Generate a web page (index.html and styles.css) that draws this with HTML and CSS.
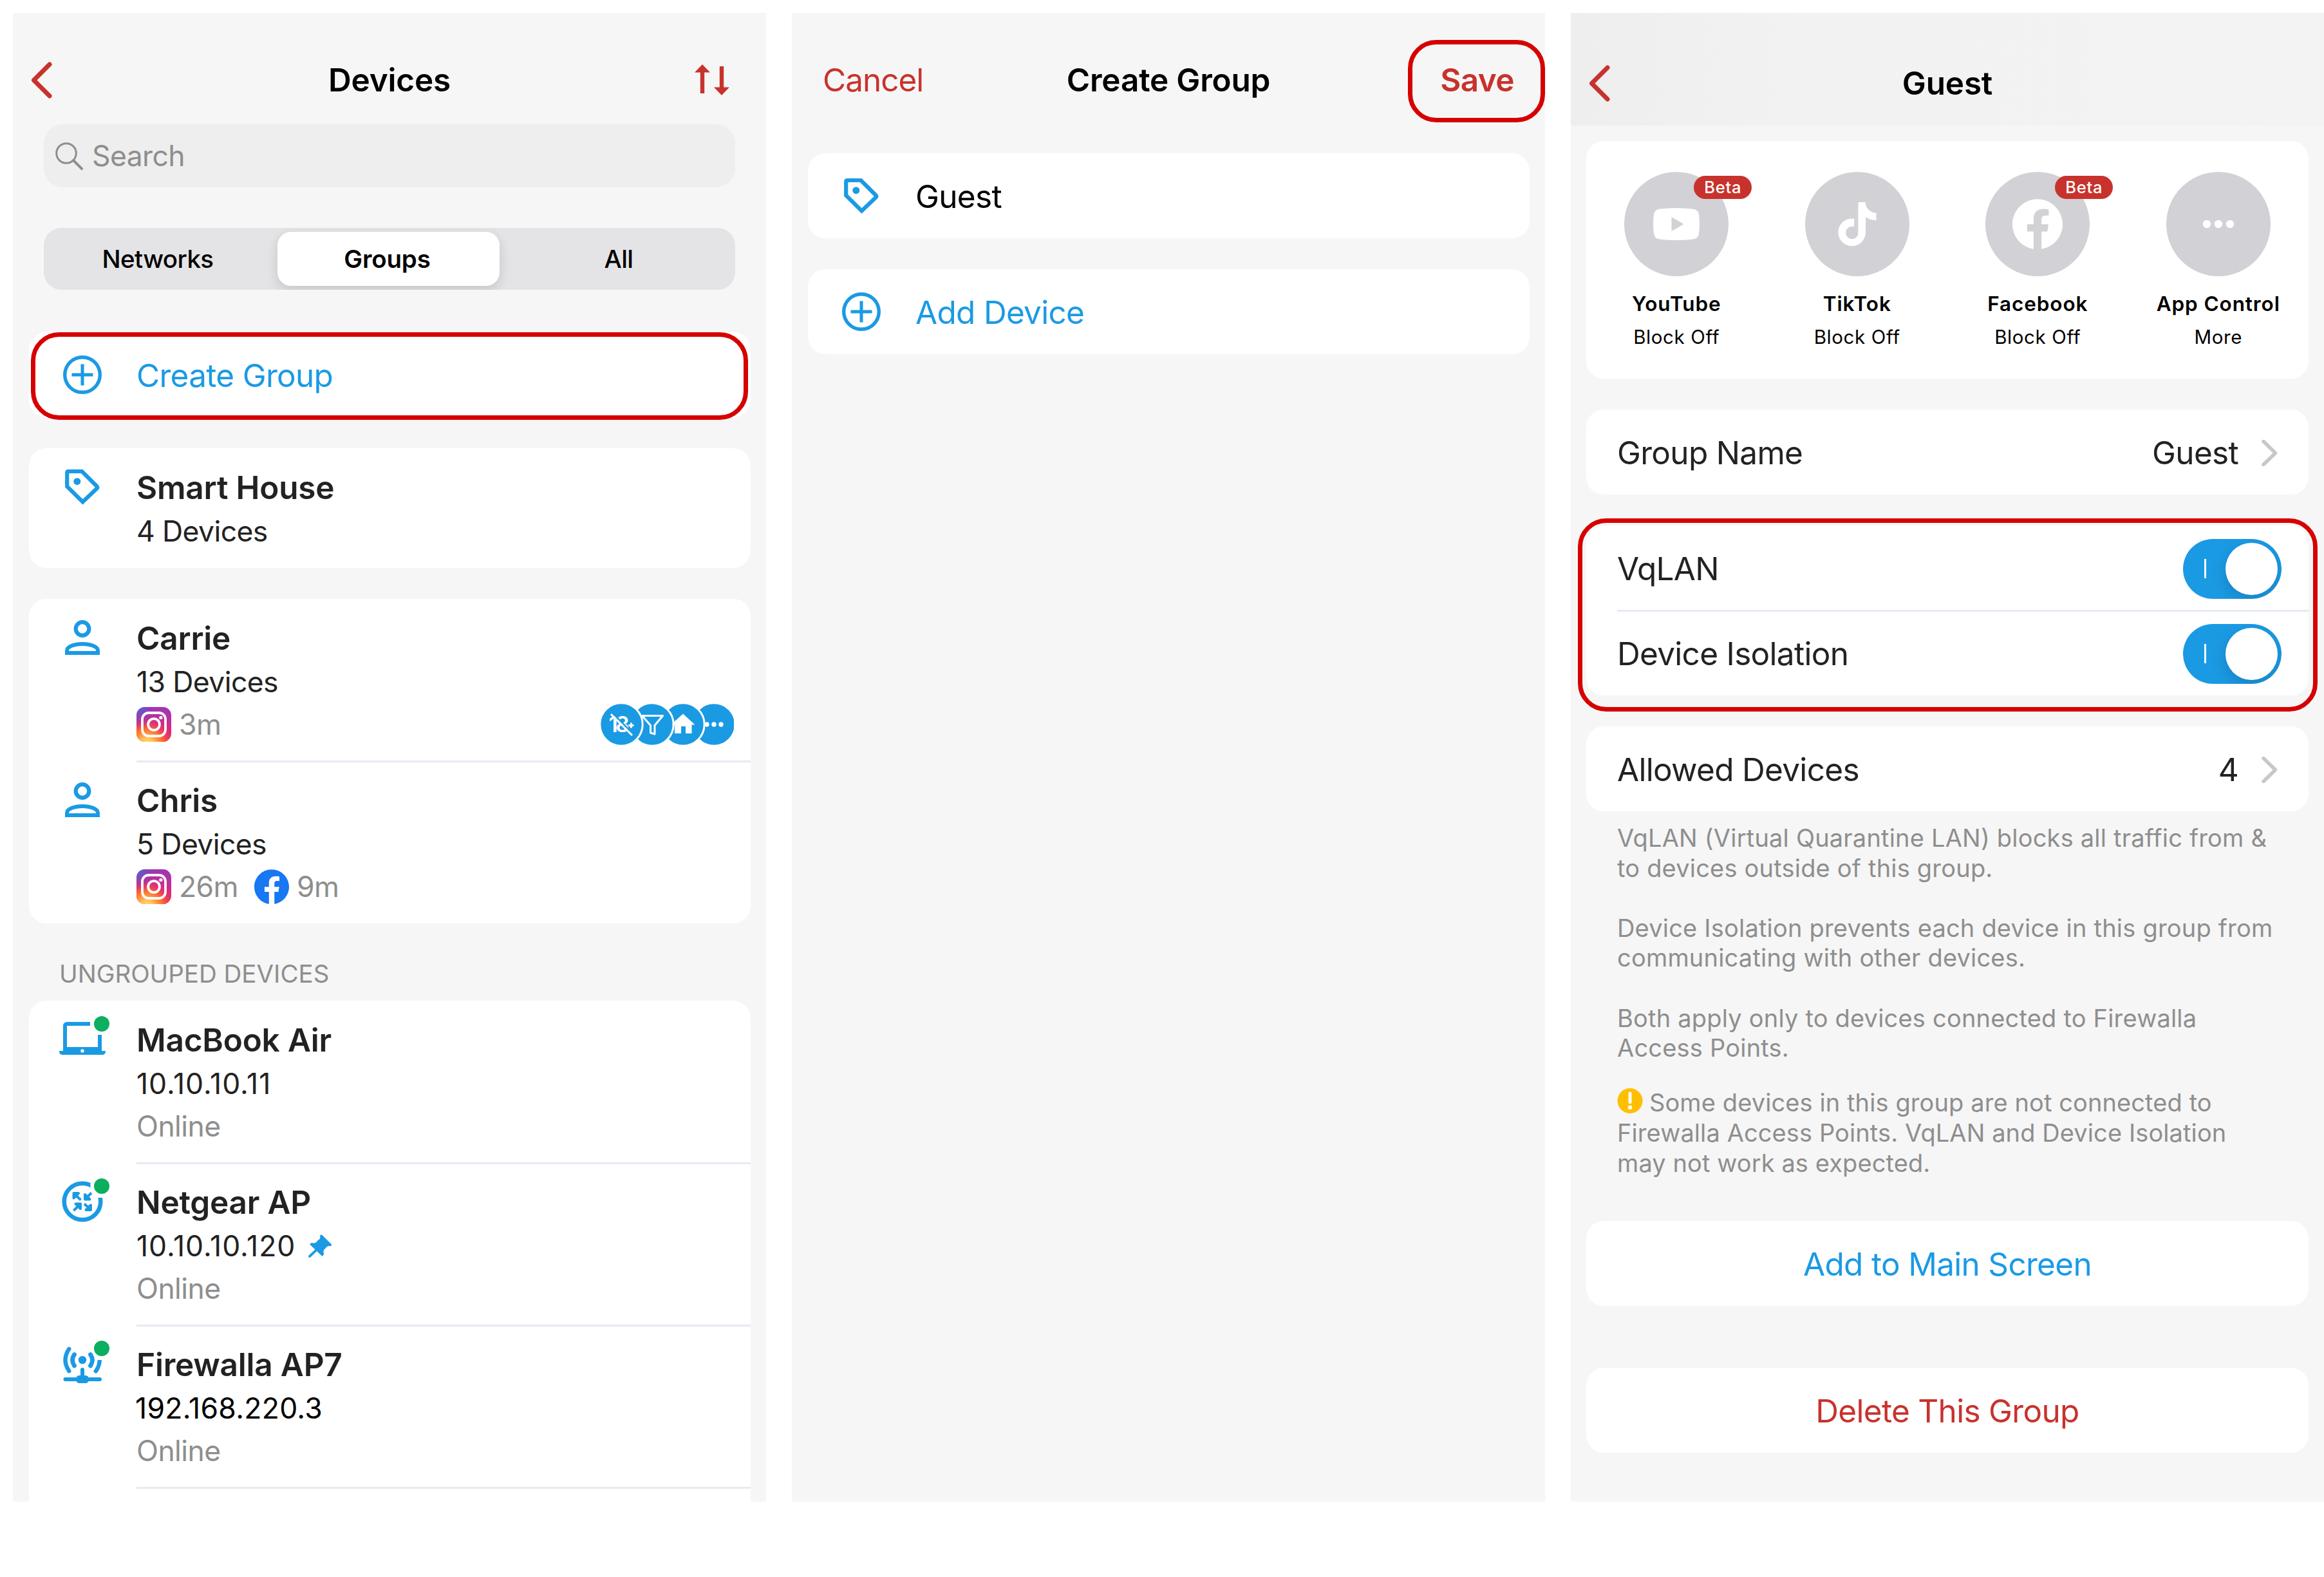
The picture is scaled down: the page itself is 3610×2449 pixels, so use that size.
FILE: index.html
```
<!DOCTYPE html>
<html lang="en">
<head>
    <meta charset="UTF-8">
    <meta name="viewport" content="width=device-width, initial-scale=1.0">
    <title>Device Groups</title>
    <link rel="stylesheet" href="styles.css">
</head>
<body>

    <!-- shared icons -->
    <svg class="sprite" width="0" height="0">
        <defs>
            <linearGradient id="ig-base" x1="0.3" y1="1" x2="0.55" y2="0">
                <stop offset="0" stop-color="#f9432f"/>
                <stop offset="0.45" stop-color="#dd2a7b"/>
                <stop offset="1" stop-color="#a234b5"/>
            </linearGradient>
            <radialGradient id="ig-warm" cx="0.3" cy="1.08" r="0.75">
                <stop offset="0" stop-color="#ffe07d"/>
                <stop offset="0.25" stop-color="#ffc35a"/>
                <stop offset="0.6" stop-color="#ff7a2a" stop-opacity="0.85"/>
                <stop offset="1" stop-color="#f0305a" stop-opacity="0"/>
            </radialGradient>
            <radialGradient id="ig-cool" cx="0" cy="0" r="0.6">
                <stop offset="0" stop-color="#3771dd"/>
                <stop offset="1" stop-color="#7a3ac8" stop-opacity="0"/>
            </radialGradient>
        </defs>
        <symbol id="back" viewBox="0 0 33 57">
            <path d="M29 4L4.500 28.500L29 53" fill="none" stroke="currentColor" stroke-width="7" stroke-linecap="round" stroke-linejoin="round"/>
        </symbol>
        <symbol id="chevron" viewBox="0 0 25 41">
            <path d="M3 2.500L21.500 20.500L3 38.500" fill="none" stroke="currentColor" stroke-width="5.500" stroke-linecap="round" stroke-linejoin="round"/>
        </symbol>
        <symbol id="plus" viewBox="0 0 84 84">
            <circle cx="42" cy="42" r="27.300" fill="none" stroke="currentColor" stroke-width="5.400"/>
            <path d="M42 25.500V58.500M25.500 42H58.500" stroke="currentColor" stroke-width="5"/>
        </symbol>
        <symbol id="tag" viewBox="0 0 84 84">
            <path d="M18.200 20.200Q18.200 18 20.400 18H41.300L64.500 41.200Q66 42.900 64.500 44.500L42.500 65.400L18.200 41.400Z" fill="none" stroke="currentColor" stroke-width="6.200"/>
            <circle cx="33.800" cy="33.700" r="5.500" fill="currentColor"/>
        </symbol>
        <symbol id="user" viewBox="0 0 84 84">
            <circle cx="42" cy="28.500" r="10.300" fill="none" stroke="currentColor" stroke-width="6.200"/>
            <path d="M18 66V62.500C18 56 30 52 42 52S66 56 66 62.500V66Z" fill="none" stroke="currentColor" stroke-width="6"/>
        </symbol>
        <symbol id="instagram" viewBox="0 0 54 54">
            <rect width="54" height="54" rx="13" fill="url(#ig-base)"/>
            <rect width="54" height="54" rx="13" fill="url(#ig-warm)"/>
            <rect width="54" height="54" rx="13" fill="url(#ig-cool)"/>
            <rect x="9" y="9" width="36" height="36" rx="10" fill="none" stroke="#fff" stroke-width="3.800"/>
            <circle cx="27" cy="27" r="8.900" fill="none" stroke="#fff" stroke-width="3.800"/>
            <circle cx="37.800" cy="16.500" r="2.600" fill="#fff"/>
        </symbol>
        <symbol id="facebook" viewBox="0 0 24 24">
            <path fill="currentColor" d="M24 12.073c0-6.627-5.373-12-12-12s-12 5.373-12 12c0 5.990 4.388 10.954 10.125 11.854v-8.385H7.078v-3.470h3.047V9.430c0-3.007 1.792-4.669 4.533-4.669 1.312 0 2.686.235 2.686.235v2.953H15.830c-1.491 0-1.956.925-1.956 1.874v2.250h3.328l-.532 3.470h-2.796v8.385C19.612 23.027 24 18.062 24 12.073z"/>
        </symbol>
    </svg>

    <!-- Devices -->
    <div class="phone">
        <header class="nav">
            <div class="nav-left"><svg class="back"><use href="#back"/></svg></div>
            <h1>Devices</h1>
            <div class="nav-right nav-sort">
                <svg width="54" height="48" viewBox="0 0 54 48">
                    <path d="M12 0L24 12.500H15.200V45H8.800V12.500H0Z" fill="currentColor"/>
                    <path d="M42 48L30 35.500H38.800V3H45.200V35.500H54Z" fill="currentColor"/>
                </svg>
            </div>
        </header>

        <div class="search">
            <svg width="43" height="43" viewBox="0 0 43 43">
                <circle cx="17" cy="17" r="15.300" fill="none" stroke="currentColor" stroke-width="3"/>
                <path d="M28 28L41 41" stroke="currentColor" stroke-width="4" stroke-linecap="round"/>
            </svg>
            <span>Search</span>
        </div>

        <div class="segments">
            <span>Networks</span>
            <span class="active">Groups</span>
            <span>All</span>
        </div>

        <div class="card action">
            <svg class="icon"><use href="#plus"/></svg>
            <span>Create Group</span>
            <div class="highlight highlight-create"></div>
        </div>

        <div class="card">
            <div class="row short">
                <svg class="icon"><use href="#tag"/></svg>
                <div class="info">
                    <h3>Smart House</h3>
                    <p>4 Devices</p>
                </div>
            </div>
        </div>

        <div class="card">
            <div class="row">
                <svg class="icon"><use href="#user"/></svg>
                <div class="info">
                    <h3>Carrie</h3>
                    <p>13 Devices</p>
                    <p class="usage"><svg><use href="#instagram"/></svg><span>3m</span></p>
                </div>
                <svg class="rules" width="210" height="70" viewBox="0 0 210 70">
                    <g fill="#1b9ae4" stroke="#fff" stroke-width="3">
                        <circle cx="179" cy="35" r="33.200"/>
                        <circle cx="131" cy="35" r="33.200"/>
                        <circle cx="83" cy="35" r="33.200"/>
                        <circle cx="35" cy="35" r="33.200"/>
                    </g>
                    <text class="age" x="15.500" y="47">18</text>
                    <path d="M50.500 32.500V40.500M46.500 36.500H54.500" stroke="#fff" stroke-width="3"/>
                    <path d="M21 17L54 50" stroke="#1b9ae4" stroke-width="2.500"/>
                    <path d="M19 19L52 52" stroke="#fff" stroke-width="3"/>
                    <path d="M67.500 21.500H99.500L87 36.500V50L80.500 48V36.500Z" fill="none" stroke="#fff" stroke-width="3" stroke-linejoin="round"/>
                    <path d="M131 18.500L149.500 35.500H144.500V49H135V38H128V49H118V35.500H114Q117 30 120 28.500Z" fill="#fff"/>
                    <g fill="#fff">
                        <circle cx="168" cy="35" r="3.700"/>
                        <circle cx="179" cy="35" r="3.700"/>
                        <circle cx="190" cy="35" r="3.700"/>
                    </g>
                </svg>
            </div>
            <div class="row">
                <svg class="icon"><use href="#user"/></svg>
                <div class="info">
                    <h3>Chris</h3>
                    <p>5 Devices</p>
                    <p class="usage">
                        <svg><use href="#instagram"/></svg><span>26m</span>
                        <svg class="fb"><use href="#facebook"/></svg><span>9m</span>
                    </p>
                </div>
            </div>
        </div>

        <h2>UNGROUPED DEVICES</h2>

        <div class="card last">
            <div class="row">
                <svg class="icon" viewBox="0 0 84 84">
                    <path d="M54 18H18.500Q15 18 15 21.500V57H69V35" fill="none" stroke="currentColor" stroke-width="6"/>
                    <path d="M6 60H78Q78 66 73 66H11Q6 66 6 60Z" fill="currentColor"/>
                    <circle cx="42" cy="60" r="2.700" fill="#fff"/>
                    <circle cx="72" cy="18" r="12" fill="#0cae60"/>
                </svg>
                <div class="info">
                    <h3>MacBook Air</h3>
                    <p class="ip">10.10.10.11</p>
                    <p class="status">Online</p>
                </div>
            </div>
            <div class="row">
                <svg class="icon" viewBox="0 0 84 84">
                    <circle cx="42" cy="42" r="28.300" fill="none" stroke="currentColor" stroke-width="6.600"/>
                    <rect x="54.500" y="0" width="30" height="36" fill="#fff"/>
                    <g fill="currentColor" stroke="currentColor" stroke-width="4" stroke-linejoin="round">
                        <path d="M28.500 29H36L28.500 36.500ZM30 30.500L39.500 39.500"/>
                        <path d="M46 31V38.500H53.500ZM48 36.500L56 28.500"/>
                        <path d="M31.500 45.500H39V53ZM37.500 47L28.500 56"/>
                        <path d="M55 47.500V55H47.500ZM53.500 53.500L45 45.500"/>
                    </g>
                    <circle cx="72" cy="18" r="12" fill="#0cae60"/>
                </svg>
                <div class="info">
                    <h3>Netgear AP</h3>
                    <p class="ip">10.10.10.120
                        <svg width="36" height="36" viewBox="0 0 36 36">
                            <path d="M18 1.500Q20-.500 22 1.500L35.500 15Q37 17 35 18Q33.500 18.500 32 17.800Q29 18.500 26.500 21.500Q22 25 24 29Q24.500 32 21.500 34L13.200 26L3 35.800H.200V33L10.500 23.400L2.200 15.500Q3.500 12.500 6 13Q11 15 14.500 9.500Q18.500 7 18.300 4.500Z" fill="currentColor"/>
                        </svg>
                    </p>
                    <p class="status">Online</p>
                </div>
            </div>
            <div class="row">
                <svg class="icon" viewBox="0 0 84 84">
                    <g fill="none" stroke="currentColor" stroke-width="6.400">
                        <path d="M21.300 18.800Q9.700 36 21.300 53.200" stroke-linecap="round"/>
                        <path d="M29.500 27.500Q23.500 36 29.500 45M54.500 27.500Q60.500 36 54.500 45" stroke-linecap="round" stroke-width="6.800"/>
                        <path d="M68.800 36Q68.500 45 63.500 52.500"/>
                        <path d="M63.300 52.500L62.800 53.300" stroke-linecap="round"/>
                        <path d="M42 51V62M15.500 66H69" stroke-width="6" stroke-linecap="round"/>
                    </g>
                    <circle cx="42" cy="36" r="6.200" fill="currentColor"/>
                    <rect x="32.500" y="60" width="19" height="12" rx="4.500" fill="currentColor"/>
                    <circle cx="72" cy="18" r="12" fill="#0cae60"/>
                </svg>
                <div class="info">
                    <h3>Firewalla AP7</h3>
                    <p class="ip ip-large">192.168.220.3</p>
                    <p class="status">Online</p>
                </div>
            </div>
            <div class="row empty"></div>
        </div>
    </div>

    <!-- Create Group -->
    <div class="phone">
        <header class="nav nav-form">
            <div class="nav-left nav-cancel">Cancel</div>
            <h1>Create Group</h1>
            <div class="nav-right nav-save">Save</div>
            <div class="highlight highlight-save"></div>
        </header>

        <div class="card action dark">
            <svg class="icon"><use href="#tag"/></svg>
            <span>Guest</span>
        </div>

        <div class="card action">
            <svg class="icon"><use href="#plus"/></svg>
            <span>Add Device</span>
        </div>
    </div>

    <!-- Group settings -->
    <div class="phone group">
        <header class="nav nav-shaded">
            <div class="nav-left"><svg class="back"><use href="#back"/></svg></div>
            <h1>Guest</h1>
            <div class="nav-right"></div>
        </header>

        <div class="card apps">
            <div class="app">
                <div class="app-icon">
                    <svg width="72" height="50" viewBox="0 0 72 50">
                        <path d="M10 1.500Q36-1.500 62 1.500Q70 2.500 71 10Q73 25 71 40Q70 47.500 62 48.500Q36 51.500 10 48.500Q2 47.500 1 40Q-1 25 1 10Q2 2.500 10 1.500Z" fill="#fff"/>
                        <path d="M28.500 14L47.500 25L28.500 36Z" fill="#d1d1d6"/>
                    </svg>
                    <span class="beta">Beta</span>
                </div>
                <h4>YouTube</h4>
                <p>Block Off</p>
            </div>
            <div class="app">
                <div class="app-icon">
                    <svg width="68" height="68" viewBox="0 0 24 24">
                        <path fill="#fff" d="M12.525.020c1.310-.020 2.610-.010 3.910-.020.080 1.530.630 3.090 1.750 4.170 1.120 1.110 2.700 1.620 4.240 1.790v4.030c-1.440-.050-2.890-.350-4.200-.970-.570-.260-1.100-.590-1.620-.930-.010 2.920.010 5.840-.020 8.750-.080 1.400-.540 2.790-1.350 3.940-1.310 1.920-3.580 3.170-5.910 3.210-1.430.080-2.860-.310-4.080-1.030-2.020-1.190-3.440-3.370-3.650-5.710-.020-.500-.030-1-.010-1.490.180-1.900 1.120-3.720 2.580-4.960 1.660-1.440 3.980-2.130 6.150-1.720.020 1.480-.040 2.960-.040 4.440-.990-.320-2.150-.230-3.020.370-.630.410-1.110 1.040-1.360 1.750-.210.510-.150 1.070-.140 1.610.240 1.640 1.820 3.020 3.500 2.870 1.120-.010 2.190-.660 2.770-1.610.190-.330.400-.670.410-1.060.100-1.790.060-3.570.070-5.360.010-4.030-.010-8.050.020-12.070z"/>
                    </svg>
                </div>
                <h4>TikTok</h4>
                <p>Block Off</p>
            </div>
            <div class="app">
                <div class="app-icon">
                    <svg width="78" height="78"><use href="#facebook"/></svg>
                    <span class="beta">Beta</span>
                </div>
                <h4>Facebook</h4>
                <p>Block Off</p>
            </div>
            <div class="app">
                <div class="app-icon">
                    <svg width="50" height="14" viewBox="0 0 50 14" fill="#fff">
                        <circle cx="7" cy="7" r="6.200"/>
                        <circle cx="25" cy="7" r="6.200"/>
                        <circle cx="43" cy="7" r="6.200"/>
                    </svg>
                </div>
                <h4>App Control</h4>
                <p>More</p>
            </div>
        </div>

        <div class="card setting">
            <span>Group Name</span>
            <span class="value">Guest</span>
            <svg class="chevron"><use href="#chevron"/></svg>
        </div>

        <div class="card toggles">
            <div class="setting divided">
                <span>VqLAN</span>
                <div class="toggle"><i></i><b></b></div>
            </div>
            <div class="setting">
                <span>Device Isolation</span>
                <div class="toggle"><i></i><b></b></div>
            </div>
            <div class="highlight highlight-toggles"></div>
        </div>

        <div class="card setting">
            <span>Allowed Devices</span>
            <span class="value">4</span>
            <svg class="chevron"><use href="#chevron"/></svg>
        </div>

        <div class="notes">
            <p>VqLAN (Virtual Quarantine LAN) blocks all traffic from &amp;<br>to devices outside of this group.</p>
            <p>Device Isolation prevents each device in this group from<br>communicating with other devices.</p>
            <p>Both apply only to devices connected to Firewalla<br>Access Points.</p>
            <p class="warning"><svg width="40" height="39" viewBox="0 0 40 39">
                <circle cx="20" cy="19.500" r="19.500" fill="#ffbf00"/>
                <path d="M20 8V21.500" stroke="#fff" stroke-width="5" stroke-linecap="round"/>
                <circle cx="20" cy="29.800" r="3.200" fill="#fff"/>
            </svg>Some devices in this group are not connected to<br>Firewalla Access Points. VqLAN and Device Isolation<br>may not work as expected.</p>
        </div>

        <div class="card button blue">Add to Main Screen</div>
        <div class="card button red">Delete This Group</div>
    </div>

</body>
</html>
```
FILE: styles.css
```
* {
    box-sizing: border-box;
}

body {
    margin: 0;
    padding: 20px 0 0 20px;
    display: flex;
    gap: 40px;
    background-color: #fff;
    font-family: Inter, "Liberation Sans", sans-serif;
    font-size: 49.5px;
    color: #222;
}

h1, h2, h3, h4, p {
    margin: 0;
}

svg {
    flex-shrink: 0;
    display: block;
}

.sprite {
    position: absolute;
}

.phone {
    width: 1170px;
    height: 2312px;
    flex-shrink: 0;
    display: flex;
    flex-direction: column;
    overflow: hidden;
    background-color: #f6f6f6;
    white-space: nowrap;
}

/* navigation bar */
.nav {
    position: relative;
    flex-shrink: 0;
    display: grid;
    grid-template-columns: minmax(0, 1fr) auto minmax(0, 1fr);
    align-items: center;
    height: 173px;
    padding: 70px 0 35px;
    color: #c8322d;
}

.nav h1 {
    font-size: 49.5px;
    font-weight: 600;
    letter-spacing: -0.2px;
    color: #000;
}

.nav-left, .nav-right {
    display: flex;
}

.nav-left {
    padding-left: 28px;
}

.nav-right {
    justify-content: flex-end;
}

.nav-sort {
    padding-right: 57px;
}

.nav-cancel {
    padding-left: 48px;
    letter-spacing: -1px;
}

.nav-save {
    padding-right: 48px;
    font-weight: 600;
    letter-spacing: -0.6px;
}

.nav-form {
    height: 218px;
    padding-bottom: 80px;
}

.nav-shaded {
    height: 175px;
    padding: 75px 0 32px;
    margin-bottom: 24px;
    background: linear-gradient(90deg, #eeeeee, #f2f2f2 30%, #f3f3f3);
}

.back {
    width: 33px;
    height: 57px;
}

/* search and tabs */
.search {
    flex-shrink: 0;
    display: flex;
    align-items: center;
    gap: 14px;
    height: 98px;
    margin: 0 48px;
    padding-left: 18px;
    border-radius: 30px;
    background-color: #eeeeee;
    color: #8e8e8e;
    font-size: 44.5px;
    letter-spacing: -0.6px;
}

.segments {
    flex-shrink: 0;
    display: grid;
    grid-template-columns: repeat(3, 1fr);
    height: 96px;
    margin: 63px 48px 66px;
    border-radius: 27px;
    background-color: #e4e4e6;
    font-size: 38.5px;
    font-weight: 500;
    letter-spacing: -0.6px;
    color: #000;
    overflow: hidden;
}

.segments span {
    display: flex;
    align-items: center;
    justify-content: center;
    padding-right: 4px;
}

.segments .active {
    margin: 6px 8px 6px 5px;
    border-radius: 21px;
    background-color: #fff;
    font-weight: 600;
    letter-spacing: -0.2px;
    box-shadow: 0 6px 18px rgba(0, 0, 0, 0.14);
}

/* cards */
.card {
    position: relative;
    flex-shrink: 0;
    margin: 0 24px 48px 25px;
    border-radius: 27px;
    background-color: #fff;
}

.group .card {
    margin-left: 24px;
}

.action {
    display: flex;
    align-items: center;
    height: 132px;
    color: #1b9ae4;
    letter-spacing: -0.7px;
}

.action span {
    padding-top: 2px;
}

.action .icon {
    margin-top: 0;
}

.action.dark span {
    color: #000;
}

.icon {
    width: 84px;
    height: 84px;
    margin: 18px 42px 0 41px;
    color: #1b9ae4;
}

.row {
    position: relative;
    display: flex;
    align-items: flex-start;
    height: 252px;
}

.row.short {
    height: 186px;
}

.row + .row::before {
    content: "";
    position: absolute;
    top: -1px;
    left: 167px;
    right: 0;
    height: 3px;
    background-color: #e6eaf3;
}

.info {
    padding-top: 27px;
}

.info h3 {
    margin-bottom: 1px;
    font-size: 49.5px;
    font-weight: 600;
    line-height: 68px;
    letter-spacing: -0.2px;
}

.info p {
    font-size: 44.5px;
    line-height: 66px;
    letter-spacing: -0.6px;
}

.info .status, .info .usage {
    color: #8e8e8e;
}

.info .ip {
    display: flex;
    align-items: center;
    gap: 20px;
    letter-spacing: 1px;
}

.info .ip-large {
    margin-left: -2px;
    color: #000;
    letter-spacing: 0.3px;
}

.ip svg {
    color: #1b9ae4;
}

.info .usage {
    display: flex;
    align-items: center;
}

.usage svg {
    width: 54px;
    height: 54px;
    margin-right: 12px;
}

.usage .fb {
    margin-left: 25px;
    color: #1877f2;
}

.rules {
    margin: 160px 26px 0 auto;
}

.age {
    font-size: 34px;
    font-weight: 600;
    letter-spacing: -4px;
    fill: #fff;
}

h2 {
    flex-shrink: 0;
    height: 120px;
    margin-top: -48px;
    padding: 55px 0 0 72px;
    font-size: 38.5px;
    font-weight: 400;
    line-height: 46px;
    color: #8e8e8e;
}

.last {
    margin-bottom: 0;
}

/* red outlines */
.highlight {
    position: absolute;
    border: 7px solid #d60000;
    border-radius: 44px;
}

.highlight-create {
    top: 0;
    left: 3px;
    right: 4px;
    height: 136px;
}

.highlight-save {
    top: 42px;
    right: 0;
    width: 213px;
    height: 128px;
}

.highlight-toggles {
    top: -11px;
    left: -13px;
    right: -14px;
    height: 300px;
}

/* app tiles */
.apps {
    display: grid;
    grid-template-columns: repeat(4, 1fr);
    height: 369px;
    padding-top: 48px;
}

.app {
    display: flex;
    flex-direction: column;
    align-items: center;
    color: #000;
}

.app-icon {
    position: relative;
    display: flex;
    align-items: center;
    justify-content: center;
    width: 162px;
    height: 162px;
    margin-bottom: 19px;
    border-radius: 50%;
    background-color: #d1d1d6;
    color: #fff;
}

.beta {
    position: absolute;
    top: 6px;
    left: 108px;
    width: 90px;
    height: 36px;
    border-radius: 18px;
    background-color: #c8322d;
    font-size: 25.5px;
    font-weight: 500;
    line-height: 36px;
    text-align: center;
    letter-spacing: 0.8px;
}

.app h4 {
    margin-bottom: 3px;
    font-size: 31.5px;
    font-weight: 600;
    line-height: 48px;
    letter-spacing: 0.9px;
}

.app p {
    font-size: 29.5px;
    line-height: 48px;
    letter-spacing: 0.6px;
}

/* settings */
.setting {
    display: flex;
    align-items: center;
    height: 132px;
    padding: 2px 48px 0;
    letter-spacing: -0.7px;
}

.setting .value {
    margin-left: auto;
    margin-right: 36px;
}

.chevron {
    width: 25px;
    height: 41px;
    color: #c7c7cc;
}

.toggles {
    height: 264px;
}

.toggles .setting {
    position: relative;
    padding-right: 42px;
}

.divided::after {
    content: "";
    position: absolute;
    left: 48px;
    right: 0;
    bottom: -2px;
    height: 3px;
    background-color: #e6eaf3;
}

.toggle {
    display: flex;
    align-items: center;
    justify-content: space-between;
    width: 153px;
    height: 93px;
    margin-left: auto;
    padding: 0 6px 0 33px;
    border-radius: 47px;
    background-color: #1b9ae4;
    overflow: hidden;
}

.toggle i {
    width: 3px;
    height: 30px;
    background-color: #fff;
}

.toggle b {
    width: 81px;
    height: 81px;
    border-radius: 50%;
    background-color: #fff;
    box-shadow: 0 9px 24px rgba(0, 0, 0, 0.15);
}

.notes {
    flex-shrink: 0;
    height: 636px;
    margin-top: -48px;
    padding: 18px 0 0 72px;
    font-size: 38px;
    line-height: 46.6px;
    letter-spacing: 0.2px;
    color: #8e8e8e;
}

.notes p {
    margin-bottom: 46.6px;
}

.notes .warning {
    margin-top: -8px;
    letter-spacing: 0.1px;
}

.warning svg {
    display: inline-block;
    margin-right: 10px;
    vertical-align: -3px;
}

.button {
    display: flex;
    align-items: center;
    justify-content: center;
    height: 132px;
    padding-top: 2px;
    margin-bottom: 96px;
    letter-spacing: -0.7px;
}

.blue {
    color: #1b9ae4;
}

.red {
    color: #c8322d;
}
```
